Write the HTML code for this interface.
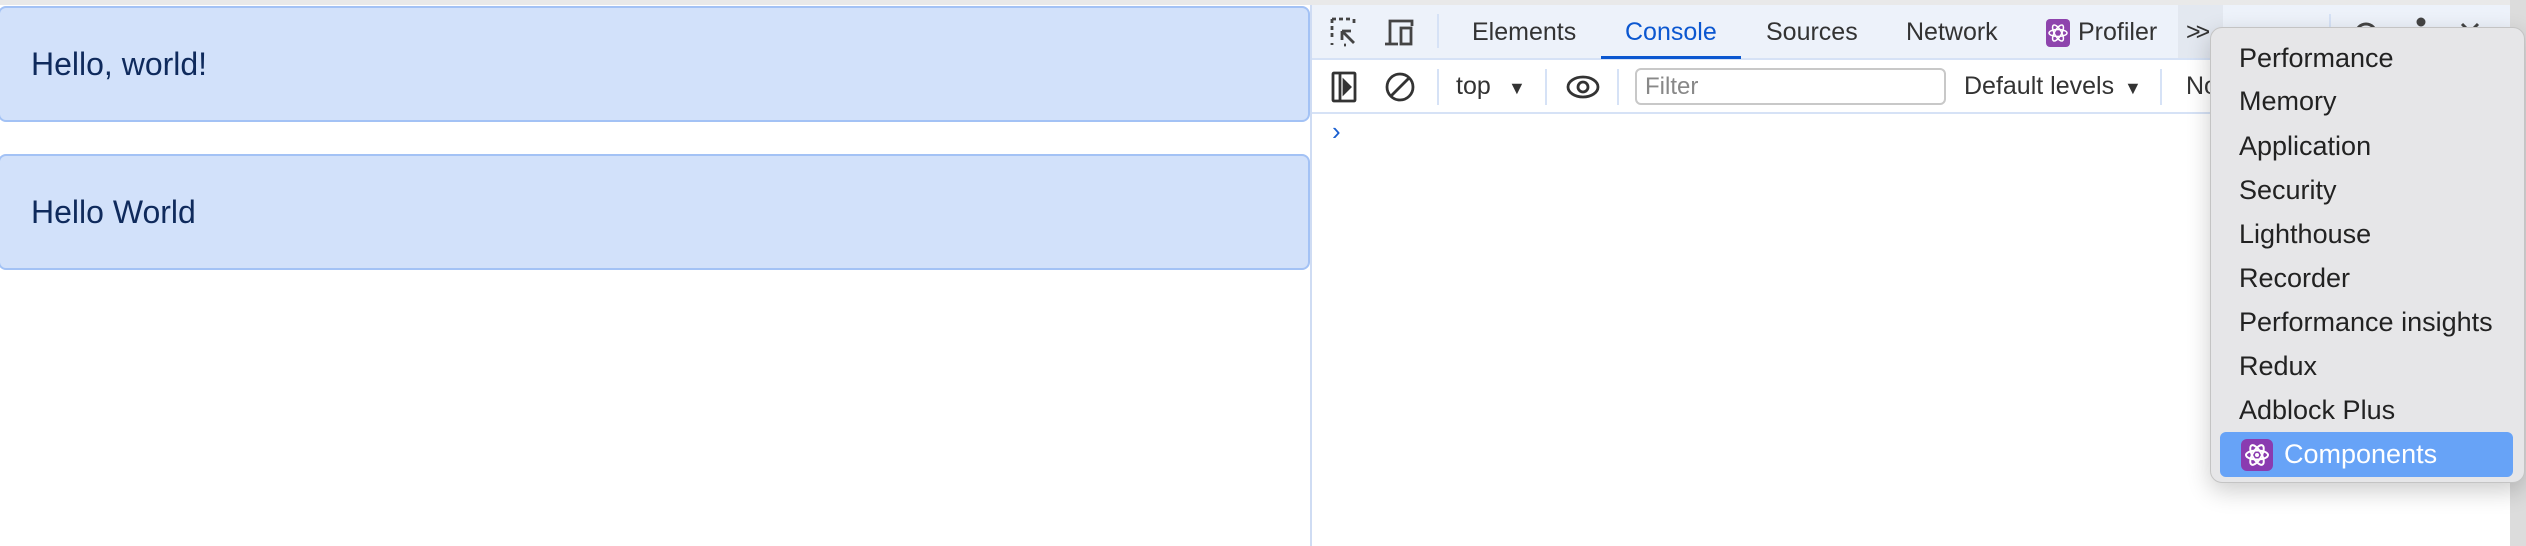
<!DOCTYPE html>
<html><head><style>
*{margin:0;padding:0;box-sizing:border-box}
body{width:2526px;height:546px;position:relative;background:#fff;font-family:"Liberation Sans",sans-serif;overflow:hidden}
.a{position:absolute}
.box{position:absolute;left:-2px;width:1312px;height:116px;background:#d2e1fa;border:2px solid #a3c2f5;border-radius:8px;color:#0f2a5c;font-size:32px;padding-left:31px;line-height:112px}
.t{position:absolute;font-size:25px;color:#333;top:18px;line-height:29px}
.sep{position:absolute;width:2px;background:#d6e2f6}
.mi{position:absolute;left:2239px;font-size:27px;color:#222;line-height:31px}
</style></head><body>
<div class="a" style="left:0;top:0;width:2526px;height:5px;background:#e9e9e9"></div>
<div class="box" style="top:6px">Hello, world!</div>
<div class="box" style="top:154px">Hello World</div>
<div class="a" style="left:1310px;top:5px;width:2px;height:541px;background:#cfdcf3"></div>
<div class="a" style="left:1312px;top:5px;width:1198px;height:53px;background:#edf2fa"></div>
<div class="a" style="left:1312px;top:58px;width:1198px;height:2px;background:#d6e2f6"></div>
<div class="a" style="left:1312px;top:112px;width:1198px;height:2px;background:#d6e2f6"></div>
<div class="a" style="left:2510px;top:0;width:16px;height:546px;background:#dcdcdc"></div>
<svg class="a" style="left:1330px;top:17px" width="90" height="30" viewBox="0 0 90 30" fill="none" stroke="#444" stroke-width="2.8">
<path d="M2 2h20M2 2v20M2 26v2M14 28h2M24 2v6" stroke-dasharray="4 3"/><path d="M12 14l12 12M12 14h9M12 14v9"/>
<path d="M60 26V4h22v5M55 27h13"/><rect x="71" y="11" width="10" height="16"/></svg>
<div class="sep" style="left:1437px;top:14px;height:34px"></div>
<div class="t" style="left:1472px">Elements</div>
<div class="t" style="left:1625px;color:#0b57d0">Console</div>
<div class="a" style="left:1601px;top:56px;width:140px;height:3px;background:#0b57d0"></div>
<div class="t" style="left:1766px">Sources</div>
<div class="t" style="left:1906px">Network</div>
<svg class="a" style="left:2046px;top:19px" width="24" height="28"><rect width="24" height="28" rx="4" fill="#8e44ad"/><g fill="none" stroke="#fff" stroke-width="1.5"><ellipse cx="12" cy="14" rx="9" ry="3.5"/><ellipse cx="12" cy="14" rx="9" ry="3.5" transform="rotate(60 12 14)"/><ellipse cx="12" cy="14" rx="9" ry="3.5" transform="rotate(-60 12 14)"/></g></svg>
<div class="t" style="left:2078px">Profiler</div>
<div class="a" style="left:2178px;top:5px;width:45px;height:53px;background:#e3e8f0"></div>
<div class="t" style="left:2186px;letter-spacing:-5px">&gt;&gt;</div>
<div class="sep" style="left:2329px;top:14px;height:34px"></div>
<svg class="a" style="left:2352px;top:14px" width="140" height="20" fill="none" stroke="#444" stroke-width="3"><circle cx="14" cy="20" r="10"/><circle cx="69" cy="8" r="3" fill="#444"/><path d="M110 10l8 8M126 10l-8 8"/></svg>
<svg class="a" style="left:1331px;top:71px" width="26" height="32" fill="none" stroke="#333" stroke-width="2.8"><rect x="2" y="2" width="22" height="28" rx="1"/><path d="M9 2v28"/><path d="M13 10l6 6-6 6z" fill="#333"/></svg>
<svg class="a" style="left:1384px;top:71px" width="32" height="32" fill="none" stroke="#333" stroke-width="2.8"><circle cx="16" cy="16" r="13"/><path d="M7 25L25 7"/></svg>
<div class="sep" style="left:1437px;top:69px;height:36px"></div>
<div class="t" style="left:1456px;top:72px">top</div>
<div class="t" style="left:1508px;font-size:18px;top:74px">▼</div>
<div class="sep" style="left:1545px;top:69px;height:36px"></div>
<svg class="a" style="left:1565px;top:73px" width="36" height="28" fill="none" stroke="#333" stroke-width="2.8"><ellipse cx="18" cy="14" rx="15" ry="10"/><circle cx="18" cy="14" r="5"/></svg>
<div class="sep" style="left:1617px;top:69px;height:36px"></div>
<div class="a" style="left:1635px;top:68px;width:311px;height:37px;border:2px solid #c8c8c8;border-radius:6px;font-size:24px;color:#888;padding:3px 0 0 8px">Filter</div>
<div class="t" style="left:1964px;top:72px">Default levels</div>
<div class="t" style="left:2124px;font-size:18px;top:74px">▼</div>
<div class="sep" style="left:2160px;top:69px;height:36px"></div>
<div class="t" style="left:2186px;top:72px">No</div>
<div class="a" style="left:1332px;top:116px;color:#1a5fd0;font-size:26px">›</div>
<div class="a" style="left:2210px;top:27px;width:315px;height:456px;background:#e6e6e8;border:1px solid #c4c4c4;border-radius:12px;box-shadow:0 8px 24px rgba(0,0,0,.2)"></div>
<div class="mi" style="top:43px">Performance</div>
<div class="mi" style="top:86px">Memory</div>
<div class="mi" style="top:131px">Application</div>
<div class="mi" style="top:175px">Security</div>
<div class="mi" style="top:219px">Lighthouse</div>
<div class="mi" style="top:263px">Recorder</div>
<div class="mi" style="top:307px">Performance insights</div>
<div class="mi" style="top:351px">Redux</div>
<div class="mi" style="top:395px">Adblock Plus</div>
<div class="a" style="left:2220px;top:432px;width:293px;height:45px;background:#67a3f7;border-radius:6px"></div>
<svg class="a" style="left:2241px;top:439px" width="32" height="32"><rect width="32" height="32" rx="6" fill="#8a3bb0"/><g fill="none" stroke="#fff" stroke-width="2"><ellipse cx="16" cy="16" rx="11" ry="4.5"/><ellipse cx="16" cy="16" rx="11" ry="4.5" transform="rotate(60 16 16)"/><ellipse cx="16" cy="16" rx="11" ry="4.5" transform="rotate(-60 16 16)"/></g><circle cx="16" cy="16" r="2" fill="#fff"/></svg>
<div class="mi" style="left:2284px;top:439px;color:#fff">Components</div>
</body></html>
